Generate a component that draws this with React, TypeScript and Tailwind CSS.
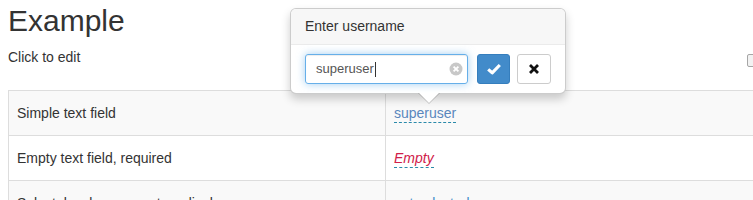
import React from "react";

const rows = [
  { label: "Simple text field", value: "superuser", kind: "link" },
  { label: "Empty text field, required", value: "Empty", kind: "empty" },
  { label: "Select, local array, custom display", value: "not selected", kind: "empty-plain" },
];

function CheckIcon() {
  return (
    <svg width="14" height="14" viewBox="0 0 14 14" aria-hidden>
      <path d="M1.2 7.4 L5.2 10.8 L12.8 3" fill="none" stroke="#fff" strokeWidth="3.2" strokeLinejoin="round" />
    </svg>
  );
}

function RemoveIcon() {
  return (
    <svg width="12" height="12" viewBox="0 0 12 12" aria-hidden>
      <path d="M2 2 L10 10 M10 2 L2 10" fill="none" stroke="#111" strokeWidth="2.8" />
    </svg>
  );
}

function ClearIcon() {
  return (
    <svg width="14" height="14" viewBox="0 0 14 14" aria-hidden>
      <circle cx="7" cy="7" r="6.5" fill="#c8c8c8" />
      <path d="M4.6 4.6 L9.4 9.4 M9.4 4.6 L4.6 9.4" fill="none" stroke="#fff" strokeWidth="1.8" />
    </svg>
  );
}

export default function App() {
  return (
    <div className="relative h-[200px] w-[753px] overflow-hidden bg-white font-['Liberation_Sans',Arial,sans-serif] text-[#333]">
      <div className="w-[900px] px-2">
        <h1 className="mt-[4px] text-[30px] leading-[33px]">Example</h1>
        <div className="mt-[10px] flex w-[752px] items-center">
          <span className="text-[14px] leading-[20px]">Click to edit</span>
          <span className="ml-auto mt-[6px] h-[13px] w-[13px] rounded-[2px] border border-[#a6a6a6] bg-[#f2f2f2]" />
        </div>
        <table className="mt-[23px] w-[900px] table-fixed border-collapse text-[14px] leading-[20px]">
          <colgroup>
            <col className="w-[377px]" />
            <col />
          </colgroup>
          <tbody>
            {rows.map((r, i) => (
              <tr key={r.label} className={i % 2 === 0 ? "bg-[#f9f9f9]" : "bg-white"}>
                <td className="border border-[#ddd] px-2 py-3">{r.label}</td>
                <td className="border border-[#ddd] px-2 py-3">
                  {r.kind === "link" && (
                    <span className="border-b border-dashed border-[#2a8aaa] pb-px text-[#5a87bd]">{r.value}</span>
                  )}
                  {r.kind === "empty" && (
                    <span className="border-b border-dashed border-[#2a8aaa] pb-px italic text-[#d0204a]">{r.value}</span>
                  )}
                  {r.kind === "empty-plain" && (
                    <span className="border-b border-dashed border-[#2a8aaa] pb-px text-[#428bca]">{r.value}</span>
                  )}
                </td>
              </tr>
            ))}
          </tbody>
        </table>
      </div>

      {/* editable popover */}
      <div className="absolute left-[290px] top-[8px] w-[276px] rounded-[6px] border border-[rgba(0,0,0,0.2)] bg-white shadow-[0_5px_10px_rgba(0,0,0,0.2)]">
        <div className="rounded-t-[5px] border-b border-[#ebebeb] bg-[#f7f7f7] px-[14px] py-2 text-[14px] leading-[19px]">
          Enter username
        </div>
        <div className="flex items-center px-[14px] py-[9px]">
          <div className="flex h-[30px] w-[163px] items-center rounded-[3px] border border-[#66afe9] pl-[10px] pr-[4px] text-[13px] text-[#555] shadow-[inset_0_1px_1px_rgba(0,0,0,0.075),0_0_8px_rgba(102,175,233,0.6)]">
            <span>superuser</span>
            <span className="ml-[1px] h-[15px] w-px bg-[#333]" />
            <span className="ml-auto flex">
              <ClearIcon />
            </span>
          </div>
          <button className="ml-[9px] flex h-[30px] w-[33px] items-center justify-center rounded-[3px] border border-[#357ebd] bg-[#428bca]">
            <CheckIcon />
          </button>
          <button className="ml-[7px] flex h-[30px] w-[34px] items-center justify-center rounded-[3px] border border-[#ccc] bg-white">
            <RemoveIcon />
          </button>
        </div>
        {/* arrow */}
        <div className="absolute left-[127px] top-full h-0 w-0 border-x-[11px] border-t-[11px] border-x-transparent border-t-[rgba(0,0,0,0.2)]" />
        <div className="absolute left-[128px] top-full h-0 w-0 border-x-[10px] border-t-[10px] border-x-transparent border-t-white" />
      </div>
    </div>
  );
}
